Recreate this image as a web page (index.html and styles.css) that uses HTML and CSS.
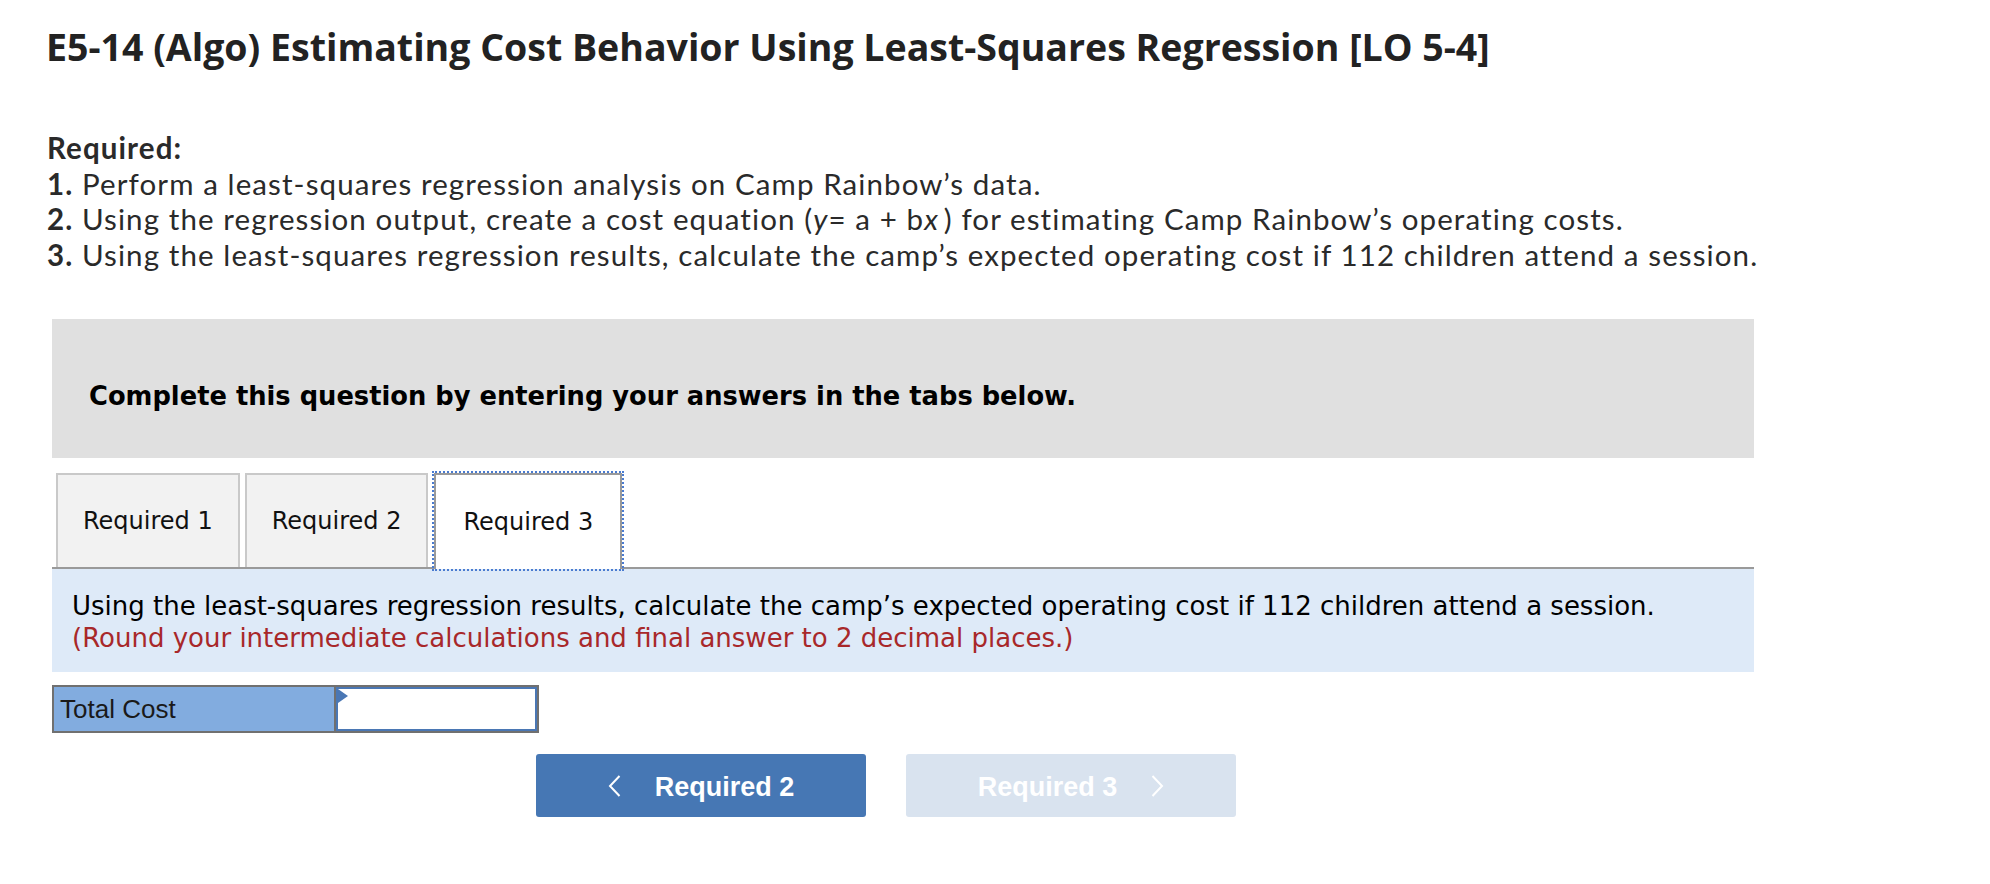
FILE: index.html
```html
<!DOCTYPE html>
<html>
<head>
<meta charset="utf-8">
<link rel="stylesheet" href="styles.css">
</head>
<body>
<div class="page">
  <h1 class="title">E5-14 (Algo) Estimating Cost Behavior Using Least-Squares Regression [LO 5-4]</h1>
  <div class="req">
    <p class="req-head">Required:</p>
    <p><b>1.</b> Perform a least-squares regression analysis on Camp Rainbow’s data.</p>
    <p><b>2.</b> Using the regression output, create a cost equation (<i>y</i>= a + b<i>x</i>&#8201;) for estimating Camp Rainbow’s operating costs.</p>
    <p><b>3.</b> Using the least-squares regression results, calculate the camp’s expected operating cost if 112 children attend a session.</p>
  </div>
  <div class="question">
    <div class="instruct">Complete this question by entering your answers in the tabs below.</div>
    <div class="tabs">
      <div class="tab">Required 1</div>
      <div class="tab">Required 2</div>
      <div class="tab active">Required 3</div>
    </div>
    <div class="panel">
      <p>Using the least-squares regression results, calculate the camp’s expected operating cost if 112 children attend a session.</p>
      <p class="note">(Round your intermediate calculations and final answer to 2 decimal places.)</p>
    </div>
    <div class="answer">
      <div class="label">Total Cost</div>
      <div class="input"><span class="flag"></span></div>
    </div>
    <div class="nav">
      <div class="btn prev">
        <svg class="chev" width="13" height="22" viewBox="0 0 13 22"><polyline points="11.5,1 2,11 11.5,21" fill="none" stroke="#fff" stroke-width="2"/></svg>
        <span>Required 2</span>
      </div>
      <div class="btn next">
        <span>Required 3</span>
        <svg class="chev" width="13" height="22" viewBox="0 0 13 22"><polyline points="1.5,1 11,11 1.5,21" fill="none" stroke="#fff" stroke-width="2"/></svg>
      </div>
    </div>
  </div>
</div>
</body>
</html>
```

FILE: styles.css
```css
html, body {
  margin: 0;
  padding: 0;
  background: #fff;
}
.page {
  padding: 25px 0 0 46px;
  font-family: "Open Sans", Lato, "Liberation Sans", sans-serif;
  color: #2a2a2a;
}
.title {
  margin: 0;
  font-size: 37.5px;
  line-height: 44px;
  font-weight: 700;
  color: #222;
}
.req {
  margin-top: 61px;
  padding-left: 1px;
  font-family: Lato, "Open Sans", sans-serif;
  font-size: 29.5px;
  letter-spacing: 1.1px;
  line-height: 35.5px;
}
.req p {
  margin: 0;
}
.req-head {
  font-weight: 700;
}
.req i {
  font-style: italic;
}
.question {
  margin: 47px 0 0 6px;
  width: 1702px;
}
.instruct {
  background: #e0e0e0;
  padding: 62px 0 47px 37px;
  font-family: "DejaVu Sans", Verdana, sans-serif;
  font-weight: 700;
  font-size: 25.75px;
  line-height: 30px;
  color: #000;
}
.tabs {
  display: flex;
  align-items: flex-start;
  margin-top: 15px;
  padding-left: 4px;
  height: 94px;
  border-bottom: 2px solid #9a9a9a;
}
.tab {
  box-sizing: border-box;
  height: 94px;
  padding: 0 25px;
  display: flex;
  align-items: center;
  background: #f2f2f2;
  border: 2px solid #c9c9c9;
  border-bottom: none;
  margin-right: 5px;
  font-family: "DejaVu Sans", Verdana, sans-serif;
  font-size: 24px;
  color: #111;
}
.tab.active {
  background: #fff;
  height: 96px;
  margin-left: 1px;
  padding: 0 27px;
  border-color: #9a9a9a;
  outline: 2px dotted #4a7bd0;
  position: relative;
  z-index: 1;
}
.panel {
  background: #deeaf8;
  padding: 21px 20px 18px;
  font-family: "DejaVu Sans", Verdana, sans-serif;
  font-size: 26px;
  line-height: 32px;
  color: #000;
}
.panel p {
  margin: 0;
}
.note {
  color: #a8282a;
}
.answer {
  display: flex;
  width: 487px;
  height: 48px;
  box-sizing: border-box;
  margin-top: 13px;
  border: 2px solid #707070;
}
.label {
  width: 282px;
  background: #82acdf;
  border-right: 2px solid #707070;
  display: flex;
  align-items: center;
  padding-left: 6px;
  box-sizing: border-box;
  font-family: "Liberation Sans", Arial, sans-serif;
  font-size: 26px;
  color: #1a1a1a;
}
.input {
  flex: 1;
  border: 2px solid #4a77b4;
  background: #fff;
  position: relative;
}
.flag {
  position: absolute;
  left: 0;
  top: 0;
  width: 0;
  height: 0;
  border-top: 7px solid transparent;
  border-bottom: 7px solid transparent;
  border-left: 10px solid #4a77b4;
}
.nav {
  display: flex;
  gap: 40px;
  margin-top: 21px;
  padding-left: 484px;
}
.btn {
  width: 330px;
  height: 63px;
  box-sizing: border-box;
  padding-top: 3px;
  border-radius: 3px;
  display: flex;
  align-items: center;
  justify-content: center;
  gap: 34px;
  font-family: "Liberation Sans", Arial, sans-serif;
  font-weight: 700;
  font-size: 27px;
  color: #fff;
}
.chev {
  margin-top: -3px;
}
.prev {
  background: #4677b4;
}
.next {
  background: #d9e3ef;
}
```
